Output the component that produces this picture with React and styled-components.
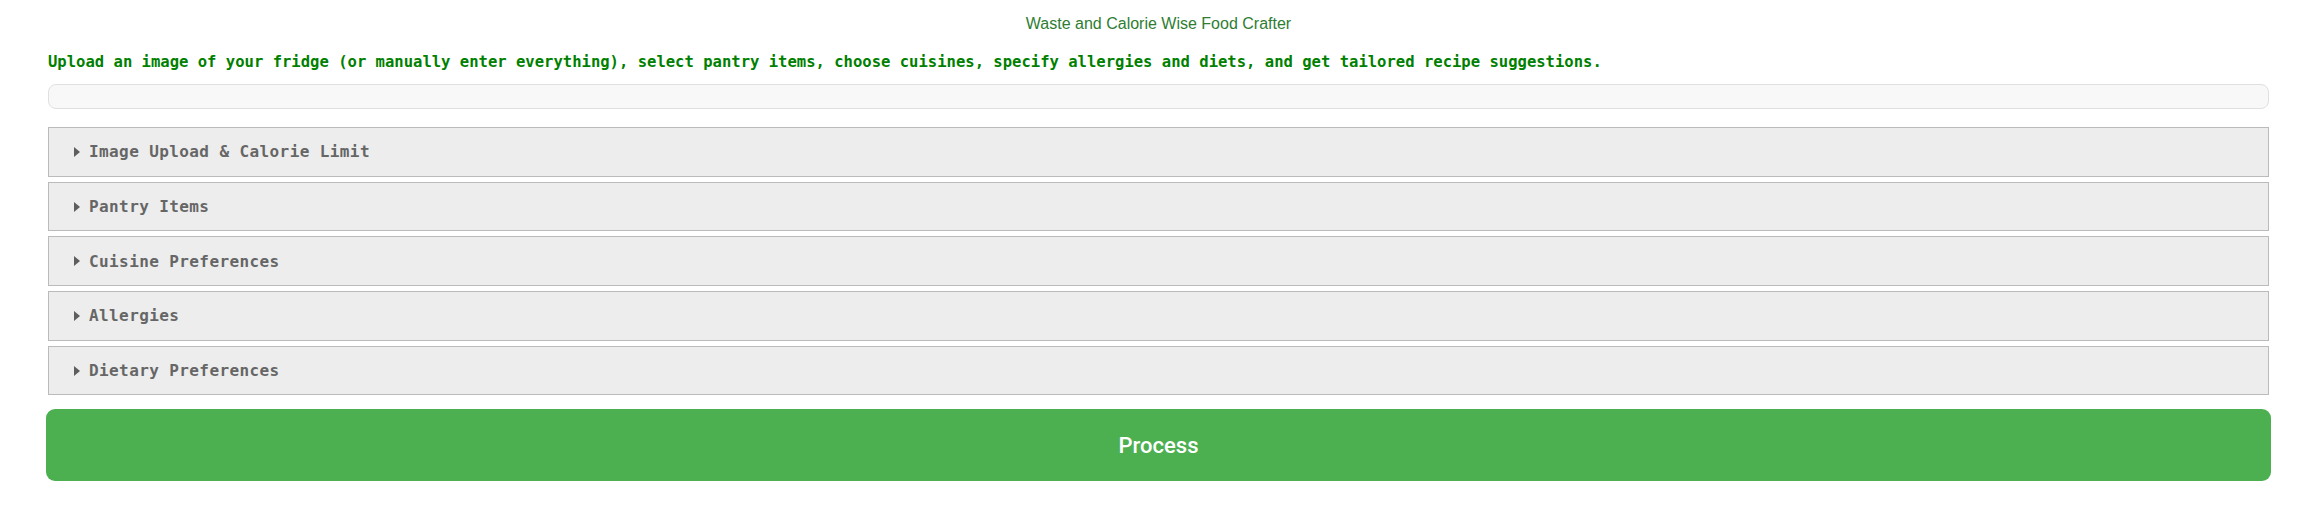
import React from 'react';
import styled, { createGlobalStyle } from 'styled-components';

const GlobalStyle = createGlobalStyle`
  html, body {
    margin: 0;
    padding: 0;
    background: #fff;
  }
`;

const Page = styled.main`
  padding: 0 43px 0 46px;
  display: flex;
  flex-direction: column;
`;

const Title = styled.h1`
  margin: 14px 0 0;
  font-family: "Liberation Sans", Arial, sans-serif;
  font-weight: 400;
  font-size: 16px;
  line-height: 20px;
  color: #2e7d32;
  text-align: center;
`;

const Intro = styled.p`
  margin: 19px 2px 0;
  font-family: "DejaVu Sans Mono", monospace;
  font-weight: 700;
  font-size: 15.55px;
  line-height: 18px;
  color: #008000;
  white-space: nowrap;
`;

const StatusBox = styled.div`
  margin: 13px 2px 0 2px;
  height: 23px;
  background: #f8f8f8;
  border: 1px solid #e0e0e0;
  border-radius: 8px;
`;

const Sections = styled.div`
  margin: 18px 2px 0 2px;
  display: flex;
  flex-direction: column;
  gap: 5px;
`;

const Section = styled.details`
  background: #ededed;
  border: 1px solid #bbb;
`;

const Summary = styled.summary`
  list-style: none;
  height: 47.7px;
  display: flex;
  align-items: center;
  gap: 9px;
  padding-left: 25px;
  font-family: "DejaVu Sans Mono", monospace;
  font-weight: 700;
  font-size: 16px;
  letter-spacing: 0.4px;
  color: #666;
  cursor: pointer;
  &::-webkit-details-marker {
    display: none;
  }
`;

const Caret = styled.span`
  width: 0;
  height: 0;
  border-top: 5px solid transparent;
  border-bottom: 5px solid transparent;
  border-left: 6px solid #5e5e5e;
`;

const ProcessButton = styled.button`
  margin: 14px 0 0;
  height: 72px;
  border: none;
  border-radius: 9px;
  background: #4caf50;
  color: #fff;
  font-family: Roboto, "Liberation Sans", sans-serif;
  font-size: 22px;
  font-weight: 500;
  cursor: pointer;
`;

const sections = [
  'Image Upload & Calorie Limit',
  'Pantry Items',
  'Cuisine Preferences',
  'Allergies',
  'Dietary Preferences',
];

const App = () => (
  <>
    <GlobalStyle />
    <Page>
      <Title>Waste and Calorie Wise Food Crafter</Title>
      <Intro>
        Upload an image of your fridge (or manually enter everything), select pantry items, choose cuisines, specify allergies and diets, and get tailored recipe suggestions.
      </Intro>
      <StatusBox />
      <Sections>
        {sections.map(name => (
          <Section key={name}>
            <Summary>
              <Caret />
              {name}
            </Summary>
          </Section>
        ))}
      </Sections>
      <ProcessButton>Process</ProcessButton>
    </Page>
  </>
);

export default App;
